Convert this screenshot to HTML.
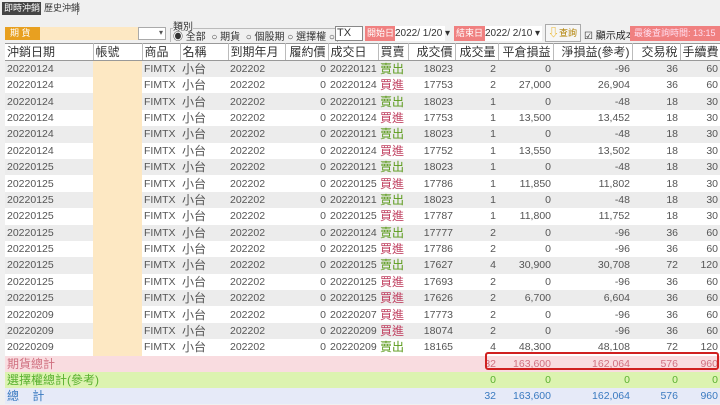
<!DOCTYPE html>
<html><head><meta charset="utf-8"><style>
*{box-sizing:border-box;margin:0;padding:0}
body{width:720px;height:405px;overflow:hidden;background:#f0f0f0;font-family:"Liberation Sans","Noto Sans CJK TC",sans-serif;font-size:11px;color:#555;position:relative}
.a{position:absolute;white-space:nowrap}
table{position:absolute;left:5px;top:43px;width:715px;border-collapse:collapse;table-layout:fixed;background:#fff}
td{height:16.4px;padding:0 2px;white-space:nowrap;overflow:hidden;font-size:10.5px;line-height:16px}
tr.h td{height:15px;background:#fff;color:#333;font-size:12px;border-right:1px solid #bbb;border-bottom:1px solid #999;border-top:1px solid #999}
tr.g td{background:#ececec}
td.ac{background:#fde8c3!important}
.r{text-align:right}
.s{color:#5a9a1a;font-size:12px}.b{color:#c04060;font-size:12px}
tr.t1 td{background:#f9dce0;color:#d07080;height:16px}
tr.t2 td{background:#dcf3b0;color:#5ab030;height:16px}
tr.t3 td{background:#e6eaf8;color:#3a7ac0;height:16px}
</style></head><body>
<div class="a" style="left:2px;top:2px;width:39px;height:13px;background:#444;color:#fff;font-size:9px;line-height:13px;padding-left:2px">即時沖銷</div>
<div class="a" style="left:42px;top:2px;width:36px;height:13px;border-right:1px solid #888;font-size:9px;line-height:13px;padding-left:2px;color:#333">歷史沖銷</div>
<div class="a" style="left:5px;top:27px;width:35px;height:13px;background:#e8a020;color:#fff;font-size:9px;line-height:13px;padding-left:5px">期 貨</div>
<div class="a" style="left:40px;top:27px;width:98px;height:13px;background:#fde8c3"></div>
<div class="a" style="left:138px;top:27px;width:28px;height:13px;background:#fff;border:1px solid #aaa;font-size:8px;text-align:right;padding-right:2px">▾</div>
<div class="a" style="left:170px;top:28px;width:168px;height:14px;border:1px solid #bbb;border-bottom:none"></div>
<div class="a" style="left:173px;top:18px;font-size:10px;color:#333;background:#f0f0f0">類別</div>
<div class="a" style="left:173px;top:28px;font-size:10px;color:#333">◉ 全部 &nbsp;○ 期貨 &nbsp;○ 個股期 ○ 選擇權 ○</div>
<div class="a" style="left:335px;top:26px;width:28px;height:15px;background:#fff;border:1px solid #888;font-size:11px;padding-left:1px;color:#333">TX</div>
<div class="a" style="left:365px;top:26px;width:30px;height:15px;background:#f08080;color:#fff;font-size:9px;line-height:15px;padding-left:2px">開始日</div>
<div class="a" style="left:395px;top:26px;width:50px;height:15px;background:#fff;font-size:10px;line-height:15px;color:#333">2022/ 1/20 ▾</div>
<div class="a" style="left:454px;top:26px;width:31px;height:15px;background:#f08080;color:#fff;font-size:9px;line-height:15px;padding-left:2px">結束日</div>
<div class="a" style="left:485px;top:26px;width:57px;height:15px;background:#fff;font-size:10px;line-height:15px;color:#333">2022/ 2/10 ▾</div>
<div class="a" style="left:545px;top:24px;width:36px;height:18px;border:1px solid #aaa;background:#f6f6f6;font-size:9px;line-height:16px;padding-left:2px;color:#b08000"><span style="color:#e8a800;font-size:11px">⇩</span>查詢</div>
<div class="a" style="left:584px;top:27px;font-size:10px;color:#222">☑ 顯示成本</div>
<div class="a" style="left:630px;top:26px;width:90px;height:15px;background:#f08080;color:#fde;font-size:9px;line-height:15px;padding-left:4px">最後查詢時間: 13:15</div>
<table>
<colgroup><col style="width:88px"><col style="width:49px"><col style="width:38px"><col style="width:48px"><col style="width:57px"><col style="width:43px"><col style="width:50px"><col style="width:30px"><col style="width:47px"><col style="width:43px"><col style="width:55px"><col style="width:79px"><col style="width:48px"><col style="width:40px"></colgroup>
<tr class="h"><td>沖銷日期</td><td>帳號</td><td>商品</td><td>名稱</td><td>到期年月</td><td class="r">履約價</td><td>成交日</td><td>買賣</td><td class="r">成交價</td><td class="r">成交量</td><td class="r">平倉損益</td><td class="r">淨損益(參考)</td><td class="r">交易稅</td><td class="r">手續費</td></tr>
<tbody id="tb"></tbody>
<tr class="t1"><td colspan="2" style="font-size:12px">期貨總計</td><td colspan="7"></td><td class="r">32</td><td class="r">163,600</td><td class="r">162,064</td><td class="r">576</td><td class="r">960</td></tr>
<tr class="t2"><td colspan="3" style="font-size:12px">選擇權總計(參考)</td><td colspan="6"></td><td class="r">0</td><td class="r">0</td><td class="r">0</td><td class="r">0</td><td class="r">0</td></tr>
<tr class="t3"><td colspan="2" style="font-size:12px">總 &nbsp; &nbsp;計</td><td colspan="7"></td><td class="r">32</td><td class="r">163,600</td><td class="r">162,064</td><td class="r">576</td><td class="r">960</td></tr>
</table>
<div class="a" style="left:485px;top:352px;width:234px;height:18px;border:2px solid #d02020;border-radius:3px"></div>
<script>
var d=[["20220124","20220121","s","18023",2,"0","-96",36,60],["20220124","20220124","b","17753",2,"27,000","26,904",36,60],["20220124","20220121","s","18023",1,"0","-48",18,30],["20220124","20220124","b","17753",1,"13,500","13,452",18,30],["20220124","20220121","s","18023",1,"0","-48",18,30],["20220124","20220124","b","17752",1,"13,550","13,502",18,30],["20220125","20220121","s","18023",1,"0","-48",18,30],["20220125","20220125","b","17786",1,"11,850","11,802",18,30],["20220125","20220121","s","18023",1,"0","-48",18,30],["20220125","20220125","b","17787",1,"11,800","11,752",18,30],["20220125","20220124","s","17777",2,"0","-96",36,60],["20220125","20220125","b","17786",2,"0","-96",36,60],["20220125","20220125","s","17627",4,"30,900","30,708",72,120],["20220125","20220125","b","17693",2,"0","-96",36,60],["20220125","20220125","b","17626",2,"6,700","6,604",36,60],["20220209","20220207","b","17773",2,"0","-96",36,60],["20220209","20220209","b","18074",2,"0","-96",36,60],["20220209","20220209","s","18165",4,"48,300","48,108",72,120]];
var h="";d.forEach(function(r,i){h+='<tr class="'+(i%2?'':'g')+'"><td>'+r[0]+'</td><td class="ac"></td><td>FIMTX</td><td style="font-size:12px">小台</td><td>202202</td><td class="r">0</td><td>'+r[1]+'</td><td class="'+r[2]+'">'+(r[2]=="s"?"賣出":"買進")+'</td><td class="r">'+r[3]+'</td><td class="r">'+r[4]+'</td><td class="r">'+r[5]+'</td><td class="r">'+r[6]+'</td><td class="r">'+r[7]+'</td><td class="r">'+r[8]+'</td></tr>';});
document.getElementById("tb").innerHTML=h;
</script>
</body></html>
